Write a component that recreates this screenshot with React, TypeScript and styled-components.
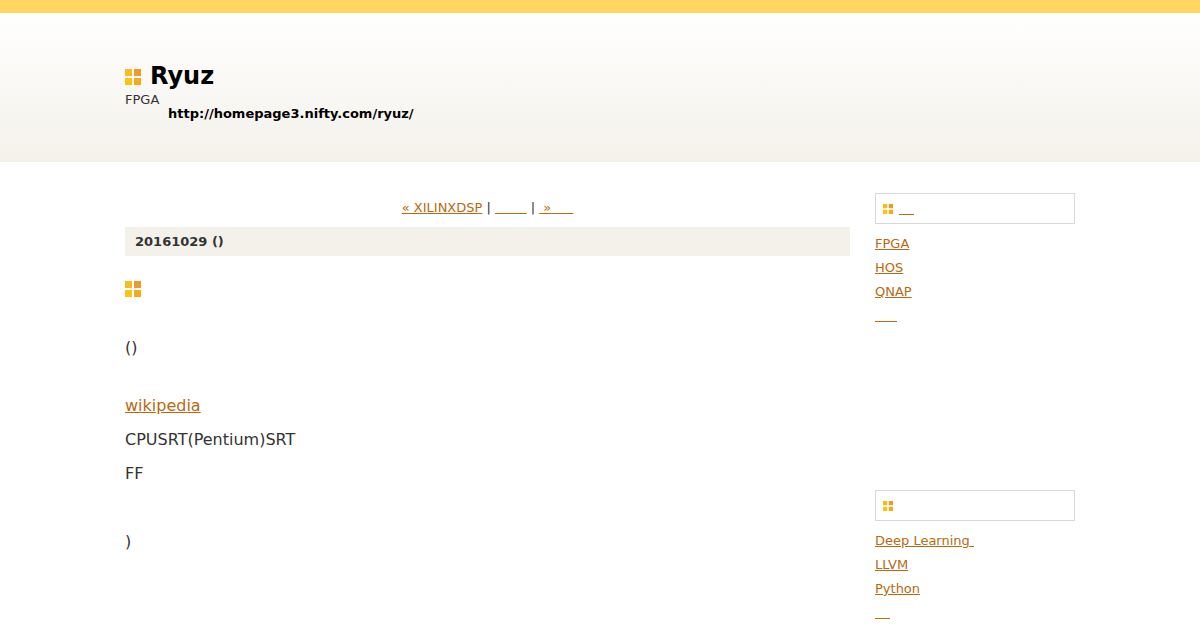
import React from 'react';
import styled, { createGlobalStyle } from 'styled-components';

const Global = createGlobalStyle`
  html, body { margin: 0; padding: 0; background: #fff; }
  body { font-family: "DejaVu Sans", sans-serif; color: #333; overflow: hidden; height: 630px; }
`;

const Banner = styled.header`
  border-top: 13px solid #ffd65f;
  height: 149px;
  box-sizing: content-box;
  padding: 0 125px;
  background: linear-gradient(#fff, #f4f1ea);
`;

const BlogTitle = styled.h1`
  margin: 0;
  padding-top: 48px;
  display: flex;
  align-items: center;
  gap: 9px;
  height: 30px;
  font-size: 24px;
  line-height: 30px;
  font-weight: 700;
  color: #000;
`;

const TitleMark = styled.span`
  display: flex;
  margin-top: 2px;
`;

const BlogDescription = styled.div`
  margin-top: 1px;
  font-size: 13px;
  line-height: 15px;
`;

const BlogUrl = styled.div`
  margin-left: 43px;
  font-size: 13px;
  line-height: 13px;
  font-weight: 700;
  color: #000;
`;

const Columns = styled.div`
  display: flex;
  justify-content: space-between;
  padding: 31px 125px 0;
`;

const Main = styled.main`
  width: 725px;
`;

const Pager = styled.div`
  text-align: center;
  font-size: 13px;
  line-height: 16px;
  padding: 7px 0 11px;
`;

const TextLink = styled.a`
  color: #b9690f;
  text-decoration: underline;
`;

const DateHeader = styled.h2`
  margin: 0;
  height: 29px;
  padding: 0 10px;
  background: #f4f1ea;
  font-size: 13px;
  line-height: 29px;
  font-weight: 700;
`;

const PostMark = styled.div`
  margin-top: 25px;
  height: 16px;
  display: flex;
`;

const Para = styled.p<{ $top: number }>`
  margin: ${(p) => p.$top}px 0 0;
  font-size: 16px;
  line-height: 24px;
`;

const Side = styled.aside`
  width: 200px;
`;

const Module = styled.section<{ $height: number }>`
  height: ${(p) => p.$height}px;
`;

const ModuleHead = styled.h3`
  margin: 0 0 8px;
  height: 29px;
  border: 1px solid #d8d8d8;
  padding-left: 7px;
  display: flex;
  align-items: center;
  gap: 6px;
  font-size: 13px;
  line-height: 29px;
  font-weight: 400;
`;

const ModuleItem = styled.div`
  font-size: 13px;
  line-height: 24px;
`;

const Mark = ({ size }: { size: number }) => {
  const s = size === 16 ? 7 : 4.25;
  const f = size - s;
  return (
    <svg width={size} height={size} viewBox={`0 0 ${size} ${size}`} style={{ flex: 'none' }}>
      <rect x="0" y="0" width={s} height={s} fill="#f6bd1c" />
      <rect x={f} y="0" width={s} height={s} fill="#ec9a2c" />
      <rect x="0" y={f} width={s} height={s} fill="#fbc414" />
      <rect x={f} y={f} width={s} height={s} fill="#f6aa18" />
    </svg>
  );
};

const N = '\u00a0';
const T = '\u2009';
const H = '\u200a';

export default function App() {
  return (
    <>
      <Global />
      <Banner>
        <BlogTitle><TitleMark><Mark size={16} /></TitleMark>Ryuz</BlogTitle>
        <BlogDescription>FPGA</BlogDescription>
        <BlogUrl>http://homepage3.nifty.com/ryuz/</BlogUrl>
      </Banner>
      <Columns>
        <Main>
          <Pager>
            <TextLink>« XILINXDSP</TextLink> | <TextLink>{N.repeat(7) + T}</TextLink> | <TextLink>{N + '»' + N.repeat(5) + H}</TextLink>
          </Pager>
          <DateHeader>20161029 ()</DateHeader>
          <PostMark><Mark size={16} /></PostMark>
          <Para $top={39}>()</Para>
          <Para $top={34}><TextLink>wikipedia</TextLink></Para>
          <Para $top={10}>CPUSRT(Pentium)SRT</Para>
          <Para $top={10}>FF</Para>
          <Para $top={44}>)</Para>
        </Main>
        <Side>
          <Module $height={297}>
            <ModuleHead><Mark size={10} /><TextLink>{N.repeat(3) + T}</TextLink></ModuleHead>
            <ModuleItem><TextLink>FPGA</TextLink></ModuleItem>
            <ModuleItem><TextLink>HOS</TextLink></ModuleItem>
            <ModuleItem><TextLink>QNAP</TextLink></ModuleItem>
            <ModuleItem><TextLink>{N.repeat(5) + H}</TextLink></ModuleItem>
          </Module>
          <Module $height={140}>
            <ModuleHead><Mark size={10} /></ModuleHead>
            <ModuleItem><TextLink>Deep Learning{N}</TextLink></ModuleItem>
            <ModuleItem><TextLink>LLVM</TextLink></ModuleItem>
            <ModuleItem><TextLink>Python</TextLink></ModuleItem>
            <ModuleItem><TextLink>{N.repeat(3) + T}</TextLink></ModuleItem>
          </Module>
        </Side>
      </Columns>
    </>
  );
}
